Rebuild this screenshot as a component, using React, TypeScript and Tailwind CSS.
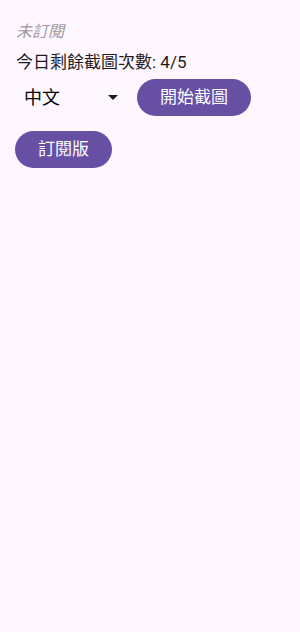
import React from "react";

export default function App() {
  return (
    <div
      className="w-[300px] h-[632px] bg-[#fef7ff] text-[#1d1b20] px-4 pt-[20px]"
      style={{ fontFamily: '"Roboto", "Noto Sans CJK TC", sans-serif' }}
    >
      <div className="italic text-[16px] leading-[24px] text-[#9e9aa2]">未訂閱</div>
      <div className="text-[17px] leading-[24px] mt-[6px]">今日剩餘截圖次數: 4/5</div>
      <div className="flex items-center mt-[5px]">
        <div className="flex items-center w-[121px] pl-[8px]">
          <span className="text-[18px] leading-[26px] text-black">中文</span>
          <svg className="ml-auto mr-[19px]" width="10" height="5" viewBox="0 0 10 5">
            <path d="M0 0 L10 0 L5 5 Z" fill="#1d1b20" />
          </svg>
        </div>
        <button className="h-[37px] px-[23px] rounded-full bg-[#6750a4] text-white text-[17px] leading-none">
          開始截圖
        </button>
      </div>
      <button className="mt-[15px] -ml-[1px] h-[37px] px-[23px] rounded-full bg-[#6750a4] text-white text-[17px] leading-none">
        訂閱版
      </button>
    </div>
  );
}
